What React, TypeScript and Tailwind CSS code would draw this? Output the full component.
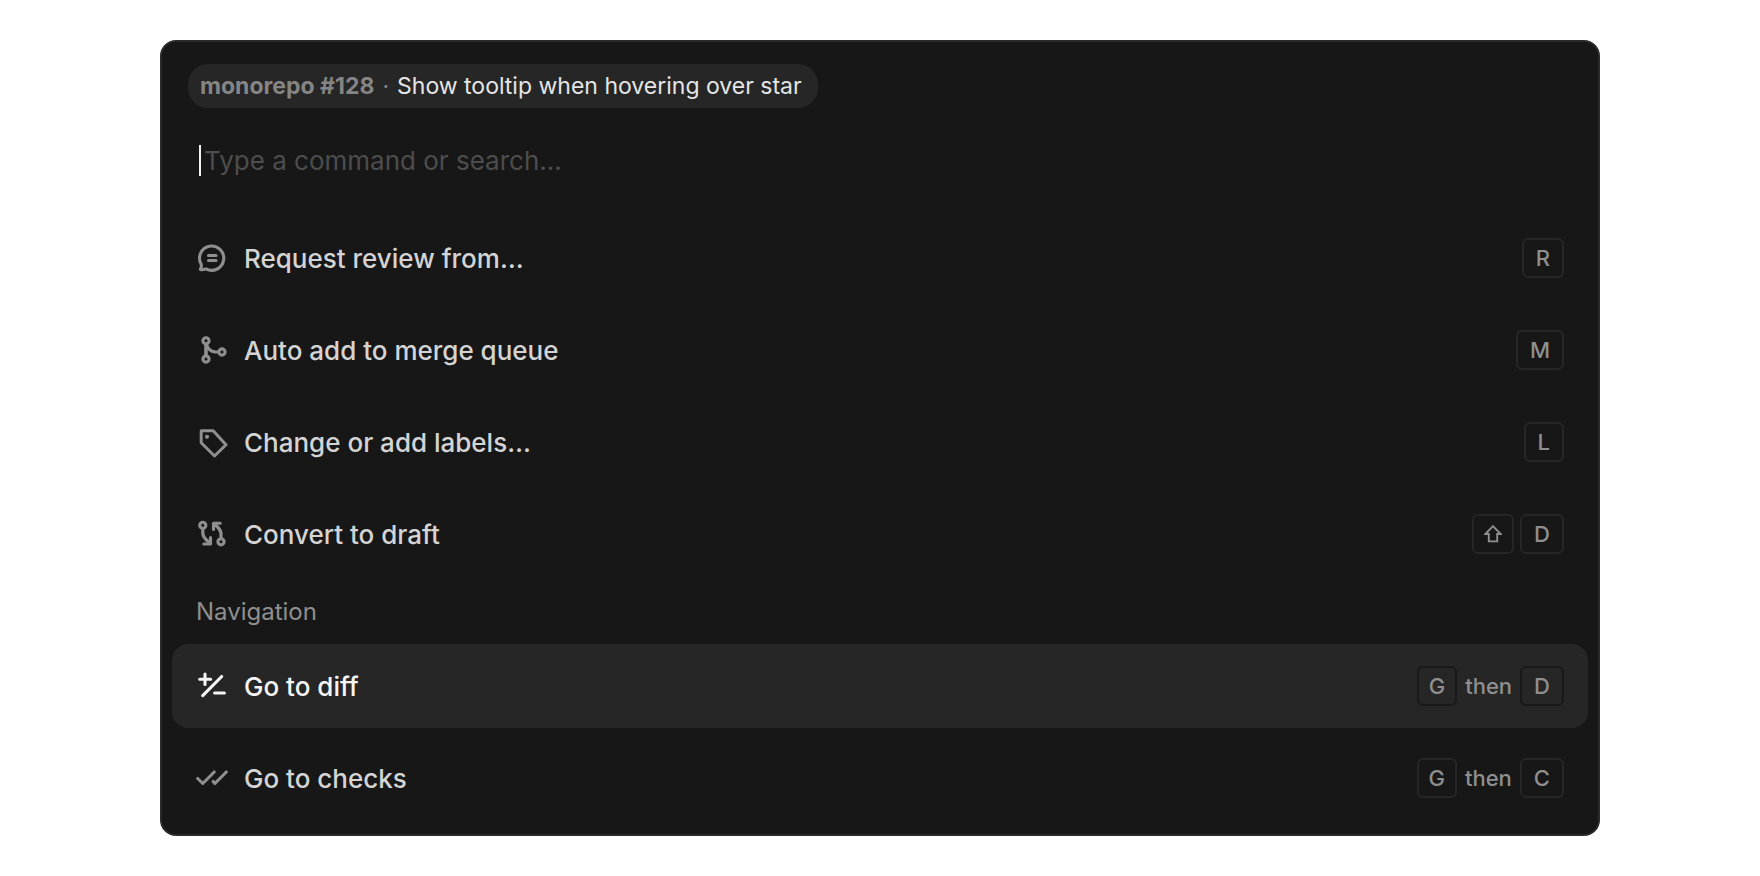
import type { ReactNode } from "react";

function Icon({ children }: { children: ReactNode }) {
  return (
    <svg
      viewBox="0 0 32 32"
      className="size-8 shrink-0"
      fill="none"
      stroke="currentColor"
      strokeWidth="3.1"
      strokeLinecap="round"
      strokeLinejoin="round"
      aria-hidden="true"
    >
      {children}
    </svg>
  );
}

const ReviewIcon = () => (
  <Icon>
    <path d="M5.200 22.300A12.100 12.100 0 1 1 10 26.900C8.400 27.500 6.400 27.900 4.900 27.700C4.400 27.600 4.300 27.200 4.600 26.700C5.400 25.500 5.600 24.100 5.200 22.300Z" />
    <path d="M12.500 13.500h7.500M12.500 18.500h7.500" />
  </Icon>
);

const MergeIcon = () => (
  <Icon>
    <circle cx="10" cy="6.800" r="3.1" />
    <circle cx="10" cy="25" r="3.1" />
    <circle cx="26" cy="18" r="3.1" />
    <path d="M10 10.500v11" strokeWidth="3.600" />
    <path d="M10.500 10.500C12 15 15 17.600 19 17.900L22.500 18" strokeWidth="3.200" />
  </Icon>
);

const LabelIcon = () => (
  <Icon>
    <path d="M5.200 4.800H17.200L30 18.700L18.500 30L5.200 16.800Z" strokeWidth="3" />
    <circle cx="11" cy="10.800" r="2.1" fill="currentColor" stroke="none" />
  </Icon>
);

const DraftIcon = () => (
  <Icon>
    <circle cx="6.800" cy="7.300" r="3.1" />
    <circle cx="25" cy="23.800" r="3.1" />
    <path d="M6.800 10.500V15C6.800 17.500 8 19.500 10 21.500L13.500 25" strokeWidth="3.2" />
    <path d="M7.800 26H14.500V19.500" />
    <path d="M25 20.500V16C25 13.500 24 11.500 22 9.500L18.500 6" strokeWidth="3.2" />
    <path d="M24.200 5.200H17.500V11.500" />
  </Icon>
);

const DiffIcon = () => (
  <Icon>
    <path d="M9 4v10.500M3.700 9.200h11M25.700 6.500L6.700 25.600M18.600 23h9.800" />
  </Icon>
);

const ChecksIcon = () => (
  <Icon>
    <path d="M1.700 16.500L6.800 21.500L18.200 10M17.200 19.500L18.900 21.500L30.300 10" />
  </Icon>
);

function Key({ children, tight, active }: { children: ReactNode; tight?: boolean; active?: boolean }) {
  return (
    <kbd
      className={`flex h-10 items-center justify-center rounded-md border-2 font-[Inter,sans-serif] text-[22px] leading-none ${
        tight ? "px-2.5" : "px-3"
      } ${active ? "border-[#191919]" : "border-[#262626]"}`}
    >
      {children}
    </kbd>
  );
}

function Chord({ first, second, active }: { first: string; second: string; active?: boolean }) {
  return (
    <span className="flex items-center gap-2 text-[22px]">
      <Key tight active={active}>{first}</Key>
      <span>then</span>
      <Key active={active}>{second}</Key>
    </span>
  );
}

function Command({
  icon,
  label,
  keys,
  active,
}: {
  icon: ReactNode;
  label: string;
  keys: ReactNode;
  active?: boolean;
}) {
  return (
    <li>
      <button
        type="button"
        className={`flex h-21 w-full items-center gap-4 rounded-2xl px-6 text-left ${
          active ? "bg-[#262626]" : ""
        }`}
      >
        <span className={active ? "text-[#f5f5f5]" : "text-[#8f8f8f]"}>{icon}</span>
        <span
          className={`grow pt-0.5 text-[26px] leading-8 font-medium ${
            active ? "text-[#f5f5f5]" : "text-[#d4d4d4]"
          }`}
        >
          {label}
        </span>
        <span className="font-medium text-[#8f8f8f]">{keys}</span>
      </button>
    </li>
  );
}

export default function App() {
  return (
    <main className="flex min-h-screen items-center justify-center bg-white px-40 py-10 font-[Inter,sans-serif]">
      <section
        aria-label="Command menu"
        className="w-full rounded-2xl border-2 border-[#2a2a2a] bg-[#171717] px-2.5 pt-5.5 pb-3.5"
      >
        <div className="px-4">
          <div className="inline-flex h-11 items-center gap-2 rounded-[20px] bg-[#262626] pr-4 pl-3 text-[23px] text-[#858585]">
            <span className="font-bold">monorepo #128</span>
            <span>·</span>
            <span className="text-[#e5e5e5]">Show tooltip when hovering over star</span>
          </div>
        </div>
        <div className="mt-9 flex h-8 items-end px-[27px]">
          <span className="h-[31px] w-0.5 bg-[#f0f0f0]" />
          <input
            type="text"
            aria-label="Command"
            placeholder="Type a command or search…"
            className="h-[31px] min-w-0 grow bg-transparent pl-[3px] text-[26px] text-[#e5e5e5] outline-none placeholder:text-[#4d4d4d]"
          />
        </div>
        <ul className="mt-10 flex flex-col gap-2">
          <Command icon={<ReviewIcon />} label="Request review from…" keys={<Key>R</Key>} />
          <Command icon={<MergeIcon />} label="Auto add to merge queue" keys={<Key>M</Key>} />
          <Command icon={<LabelIcon />} label="Change or add labels…" keys={<Key>L</Key>} />
          <Command
            icon={<DraftIcon />}
            label="Convert to draft"
            keys={
              <span className="flex gap-1.5">
                <Key>
                  <svg viewBox="0 0 18 18" className="-mx-0.5 size-[18px]" fill="none" stroke="currentColor" strokeWidth="1.9" role="img" aria-label="Shift">
                    <path d="M9 1.200L16.600 9H13.200V16.400H4.800V9H1.400Z" />
                  </svg>
                </Key>
                <Key>D</Key>
              </span>
            }
          />
        </ul>
        <h2 className="flex h-17 items-center px-6 pt-1 text-2xl text-[#8f8f8f]">Navigation</h2>
        <ul className="flex flex-col gap-2">
          <Command active icon={<DiffIcon />} label="Go to diff" keys={<Chord active first="G" second="D" />} />
          <Command icon={<ChecksIcon />} label="Go to checks" keys={<Chord first="G" second="C" />} />
        </ul>
      </section>
    </main>
  );
}
